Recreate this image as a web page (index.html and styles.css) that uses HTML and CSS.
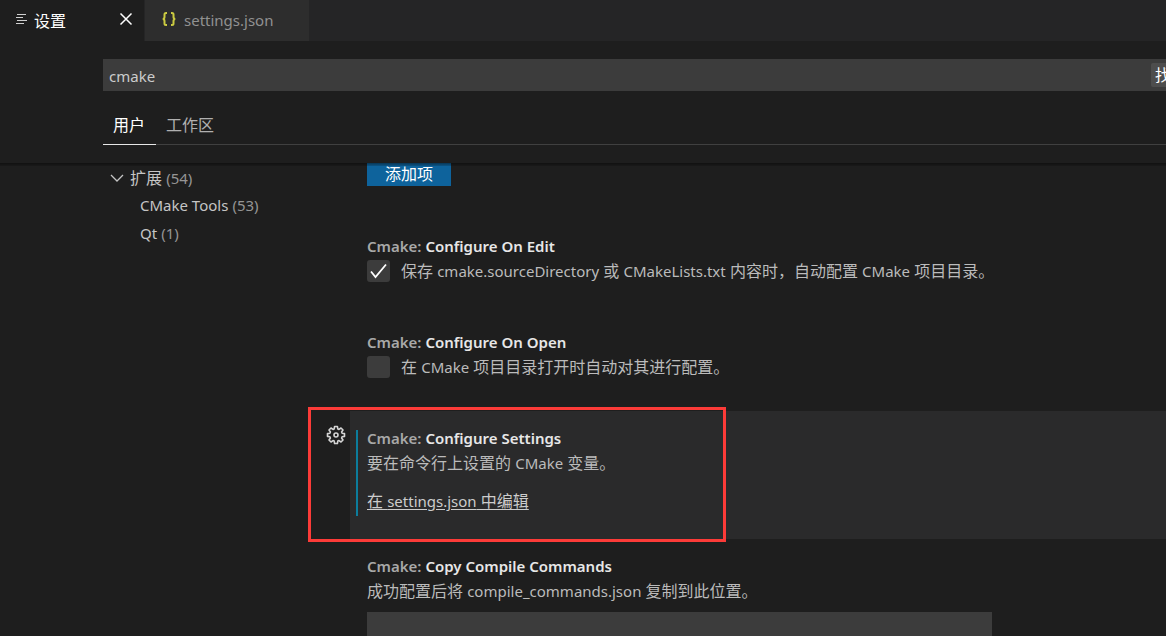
FILE: index.html
```html
<!DOCTYPE html>
<html lang="zh-CN">
<head>
<meta charset="utf-8">
<title>设置</title>
<link rel="stylesheet" href="styles.css">
</head>
<body>
<nav class="tabs">
  <div class="tab tab-active">
    <svg class="tab-icon" width="12" height="14" viewBox="0 0 12 14" fill="none" stroke="#d0d0d0" stroke-width="1.200"><path d="M1 1.500h9M0 4.500h7M1 7.500h10M0 10.500h8"/></svg>
    <span class="tab-name">设置</span>
    <button class="close" aria-label="关闭"><svg width="14" height="14" viewBox="0 0 14 14" fill="none" stroke="#fff" stroke-width="1.500"><path d="M1.500 1.500l11 11M12.500 1.500l-11 11"/></svg></button>
  </div>
  <div class="tab tab-idle">
    <svg class="tab-icon" width="14" height="14" viewBox="0 0 14 14" fill="none" stroke="#cbcb41" stroke-width="2"><path d="M5 1H4Q2.500 1 2.500 2.500V5Q2.500 6.800 .8 7Q2.500 7.200 2.500 9V11.500Q2.500 13 4 13H5M9 1H10Q11.500 1 11.500 2.500V5Q11.500 6.800 13.200 7Q11.500 7.200 11.500 9V11.500Q11.500 13 10 13H9"/></svg>
    <span class="latin">settings.json</span>
  </div>
</nav>
<header class="header">
  <div class="search">
    <input class="search-input latin" type="text" value="cmake" aria-label="搜索设置">
    <span class="count">找</span>
  </div>
  <div class="scopes">
    <button class="scope scope-active">用户</button>
    <button class="scope">工作区</button>
  </div>
</header>
<div class="body">
  <aside class="toc">
    <div class="toc-row"><svg width="14" height="14" viewBox="0 0 14 14" fill="none" stroke="#c5c5c5" stroke-width="1.300"><path d="M1 4l6 6 6-6"/></svg><span class="toc-root">扩展 <span class="latin dim">(54)</span></span></div>
    <div class="toc-row toc-child latin">CMake Tools <span class="dim">(53)</span></div>
    <div class="toc-row toc-child latin">Qt <span class="dim">(1)</span></div>
  </aside>
  <main class="list">
    <section class="item item-first"><button class="add">添加项</button></section>
    <section class="item">
      <h2 class="title"><span class="cat">Cmake:</span> Configure On Edit</h2>
      <label class="check"><input class="box" type="checkbox" checked><svg class="tick" width="23" height="22" viewBox="0 0 23 22" fill="none" stroke="#fff" stroke-width="1.800"><path d="M4 11.500l4.500 5.500L19 4.500"/></svg><span>保存 <span class="latin">cmake.sourceDirectory</span> 或 <span class="latin">CMakeLists.txt</span> 内容时，自动配置 <span class="latin">CMake</span> 项目目录。</span></label>
    </section>
    <section class="item">
      <h2 class="title"><span class="cat">Cmake:</span> Configure On Open</h2>
      <label class="check"><input class="box" type="checkbox"><span>在 <span class="latin">CMake</span> 项目目录打开时自动对其进行配置。</span></label>
    </section>
    <section class="item item-focus">
      <div class="frame"></div>
      <div class="modified"></div>
      <button class="gear" aria-label="更多操作"><svg width="20" height="20" viewBox="0 0 20 20" fill="none" stroke="#d4d4d4" stroke-width="1.600" stroke-linejoin="round"><path d="M8.600 1.500h2.800l.4 2.400 1.200.5 2-1.400 2 2-1.400 2 .5 1.200 2.400.4v2.800l-2.400.4-.5 1.200 1.400 2-2 2-2-1.400-1.200.5-.4 2.400H8.600l-.4-2.400-1.200-.5-2 1.400-2-2 1.400-2-.5-1.200-2.400-.4V8.600l2.400-.4.5-1.200-1.400-2 2-2 2 1.400 1.200-.5z"/><circle cx="10" cy="10" r="2"/></svg></button>
      <h2 class="title"><span class="cat">Cmake:</span> Configure Settings</h2>
      <p class="desc">要在命令行上设置的 <span class="latin">CMake</span> 变量。</p>
      <a class="edit" href="#">在 <span class="latin">settings.json</span> 中编辑</a>
    </section>
    <section class="item">
      <h2 class="title"><span class="cat">Cmake:</span> Copy Compile Commands</h2>
      <p class="desc">成功配置后将 <span class="latin">compile_commands.json</span> 复制到此位置。</p>
      <input class="field" type="text" aria-label="Copy Compile Commands">
    </section>
  </main>
</div>
</body>
</html>
```
FILE: styles.css
```css
* { box-sizing: border-box; }
body {
  margin: 0;
  height: 100vh;
  overflow: hidden;
  display: flex;
  flex-direction: column;
  background: #1e1e1e;
  color: #bbbbbb;
  font: 16px/24px "Noto Sans", "Noto Sans CJK SC", sans-serif;
}
button { border: 0; padding: 0; background: none; color: inherit; font: inherit; }
input { border: 0; margin: 0; border-radius: 0; outline: 0; }
.latin { font-size: 15px; }
.dim { color: #959595; }

.tabs { display: flex; flex: none; height: 41px; background: #252526; }
.tab { display: flex; align-items: center; }
.tab-icon { flex: none; margin-bottom: 2px; }
.tab-active { width: 144px; padding: 0 11px 0 16px; gap: 6px; background: #1e1e1e; color: #fff; margin-right: 1px; }
.tab-name { flex: 1; }
.close { display: flex; margin-bottom: 3px; }
.tab-idle { width: 164px; padding: 0 0 2px 17px; gap: 8px; background: #2d2d2d; color: #919191; }

.header { flex: none; height: 122px; padding: 18px 0 0 103px; }
.search { display: flex; align-items: center; height: 32px; background: #3c3c3c; }
.search-input { flex: 1; min-width: 0; height: 32px; padding: 1px 6px 0; background: none; color: #cccccc; font-family: inherit; }
.count { flex: none; padding: 0 4px; margin-right: -9px; border-radius: 2px; background: #4d4d4d; color: #fff; }
.scopes { display: flex; height: 54px; padding-top: 14px; border-bottom: 1px solid #404040; }
.scope { height: 40px; padding: 0 10px; color: #b0b0b0; }
.scope-active { padding-right: 11px; color: #fff; border-bottom: 1px solid #e7e7e7; }

.body { flex: 1; min-height: 0; display: flex; overflow: hidden; position: relative; }
.body::before { content: ""; position: absolute; z-index: 2; top: 0; left: 0; right: 0; height: 3px; background: linear-gradient(rgba(0,0,0,.45), rgba(0,0,0,.15)); }
.toc { flex: none; width: 350px; padding: 1px 0 0 110px; }
.toc-row { display: flex; align-items: center; height: 28px; gap: 6px; color: #c5c5c5; }
.toc-child { padding: 0 0 2px 30px; gap: 4px; }
.list { flex: 1; min-width: 0; }
.item { position: relative; min-height: 96px; padding: 15px 17px 0; }
.item-first { min-height: 56px; height: 56px; padding-top: 0; }
.add { display: block; width: 84px; height: 23px; line-height: 23px; background: #0e639c; color: #fff; }
.title { margin: 0; font-size: 15px; line-height: 24px; font-weight: 600; color: #e7e7e7; }
.cat { color: #a8a8a8; }
.desc { margin: 0; line-height: 26px; }
.check { display: flex; align-items: center; height: 26px; gap: 11px; position: relative; white-space: nowrap; }
.box { appearance: none; flex: none; width: 23px; height: 22px; border-radius: 3px; background: #3c3c3c; }
.tick { position: absolute; left: 0; top: 2px; }
.item-focus { height: 128px; background: #2a2a2b; }
.frame { position: absolute; left: -42px; top: -4px; bottom: -3px; width: 418px; border: 3px solid #fc3b38; }
.modified { position: absolute; left: 6px; top: 19px; bottom: 23px; width: 2px; background: #0c7d9d; }
.gear { position: absolute; left: -24px; top: 14px; display: flex; }
.edit { display: inline-block; margin-top: 13px; color: #cccccc; text-underline-offset: 2px; }
.field { display: block; width: 625px; max-width: 100%; height: 34px; margin-top: 8px; background: #3c3c3c; }
```
